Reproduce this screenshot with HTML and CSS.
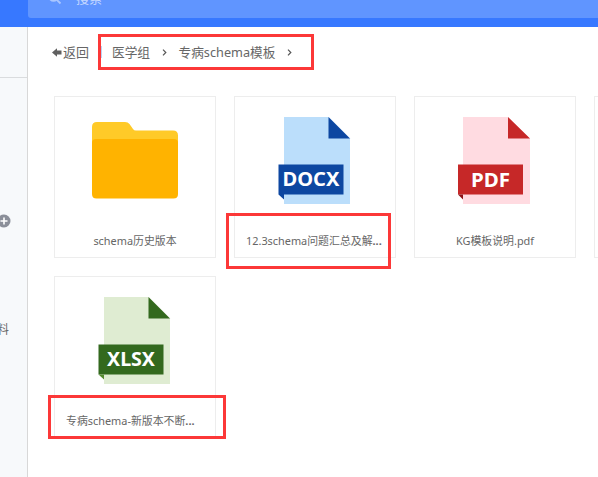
FILE: index.html
```html
<!DOCTYPE html>
<html lang="zh-CN">
<head>
<meta charset="utf-8">
<title>专病schema模板</title>
<link rel="stylesheet" href="styles.css">
</head>
<body>
<header class="topbar">
  <div class="search">
    <svg class="search-icon" width="14" height="14" viewBox="0 0 14 14"><circle cx="5.5" cy="5.5" r="4.3"/><path d="M8.5 8.5L12.5 12.5"/></svg>
    <span>搜索</span>
  </div>
</header>
<div class="layout">
  <aside class="sidebar">
    <div class="side-head"></div>
    <svg class="add" width="14" height="14" viewBox="0 0 14 14"><circle cx="7" cy="7" r="6.500"/><path d="M7 3.5V10.5M3.5 7H10.5"/></svg>
    <div class="side-item">资料</div>
  </aside>
  <main class="content">
    <nav class="crumbs">
      <svg class="back" width="10" height="9" viewBox="0 0 10 9"><path d="M0 4.5L5 .2V2.500H9.5V6.500H5V8.800Z"/></svg>
      <span class="back-text">返回</span>
      <i class="divider"></i>
      <span class="crumb-group">医学组</span>
      <svg class="chevron" width="5" height="7" viewBox="0 0 5 7"><path d="M1 .7L3.8 3.5L1 6.3"/></svg>
      <span class="crumb-current">专病schema模板</span>
      <svg class="chevron" width="5" height="7" viewBox="0 0 5 7"><path d="M1 .7L3.8 3.5L1 6.3"/></svg>
    </nav>
    <div class="files">
      <div class="card">
        <svg class="icon" width="160" height="120" viewBox="0 0 160 120">
          <path fill="#ffca28" d="M37 55V30Q37 25 42 25H70Q73 25 74.500 27L78 32Q79 33.500 81 33.500H118Q123 33.500 123 38.500V55Z"/>
          <path fill="#ffb300" d="M37 46Q37 42 41 42H119Q123 42 123 46V97Q123 101.500 118.500 101.500H41.500Q37 101.500 37 97Z"/>
        </svg>
        <div class="name">schema历史版本</div>
      </div>
      <div class="card">
        <svg class="icon" width="160" height="120" viewBox="0 0 160 120">
          <path fill="#bbdefb" d="M49 20H93.500L115 41.500V107H49Z"/>
          <path fill="#0d47a1" d="M93.500 20L115 41.500H93.500ZM43.500 67.500H108.500V97.500H49V102.500L43.500 97.500Z"/>
          <text class="type" x="76" y="89" textLength="57" lengthAdjust="spacingAndGlyphs">DOCX</text>
        </svg>
        <div class="name long">12.3schema问题汇总及解<b>...</b></div>
      </div>
      <div class="card">
        <svg class="icon" width="160" height="120" viewBox="0 0 160 120">
          <path fill="#ffdbe1" d="M48 20H93L115 41.500V107H48Z"/>
          <path fill="#c62828" d="M93 20L115 41.500H93ZM43 67.500H108V97.500H43Z"/>
          <path fill="#8e1016" d="M43 97.500H48V102.500Z"/>
          <text class="type" x="75.500" y="90" textLength="39" lengthAdjust="spacingAndGlyphs">PDF</text>
        </svg>
        <div class="name">KG模板说明.pdf</div>
      </div>
      <div class="card"></div>
      <div class="card">
        <svg class="icon" width="160" height="120" viewBox="0 0 160 120">
          <path fill="#dfecd2" d="M49 20H93.500L115 41.500V107H49Z"/>
          <path fill="#33691e" d="M93.500 20L115 41.500H93.500ZM43.500 67.500H108.500V97.500H43.500Z"/>
          <path fill="#558b2f" d="M43.500 97.500H49V102.500Z"/>
          <text class="type" x="76" y="89" textLength="48" lengthAdjust="spacingAndGlyphs">XLSX</text>
        </svg>
        <div class="name long">专病schema-新版本不断<b>...</b></div>
      </div>
    </div>
  </main>
</div>
<div class="mark mark-path"></div>
<div class="mark mark-docx"></div>
<div class="mark mark-xlsx"></div>
</body>
</html>
```
FILE: styles.css
```css
* { box-sizing: border-box; }
body {
  margin: 0;
  width: 598px;
  height: 477px;
  overflow: hidden;
  position: relative;
  background: #fff;
  color: #666;
  font-family: "Noto Sans", "Noto Sans CJK SC", sans-serif;
}
svg { display: block; flex: none; }
.topbar { height: 27px; padding-left: 28px; background: #3778ff; overflow: hidden; }
.search {
  display: flex;
  align-items: flex-end;
  height: 18px;
  padding: 0 0 0 20px;
  border-radius: 0 0 0 3px;
  background: #6095ff;
  color: #c3d7ff;
  font-size: 13px;
  line-height: 20px;
}
.search-icon { margin-bottom: 13px; fill: none; stroke: #a9c6ff; stroke-width: 1.8; }
.search span { margin: 0 0 10px 14px; }
.layout { display: flex; height: 450px; overflow: hidden; }
.sidebar {
  display: flex;
  flex: none;
  flex-direction: column;
  align-items: flex-end;
  width: 28px;
  border-right: 1px solid #d8d8d8;
  background: #f7f9fb;
  overflow: hidden;
}
.side-head { width: 27px; height: 51px; border-bottom: 1px solid #dadcde; }
.add { margin: 136px 16px 0 0; fill: #8b8f99; stroke: #fff; stroke-width: 1.6; }
.add circle { stroke: none; }
.side-item { margin: 92px 18px 0 0; font-size: 12px; line-height: 20px; white-space: nowrap; }
.content { flex: none; width: 750px; padding: 15px 0 0 26px; }
.crumbs { display: flex; align-items: center; height: 20px; font-size: 13px; line-height: 20px; white-space: nowrap; }
.back { margin: 0 1px 0 -2px; fill: #606060; }
.back-text { width: 26px; }
.divider { flex: none; width: 1px; height: 12px; margin: 0 10px 0 12px; background: #bcd4f5; }
.crumb-group { width: 39px; font-size: 12.7px; }
.crumb-current { width: 97px; margin-left: 11.5px; font-size: 12.7px; }
.chevron { margin-left: 11px; fill: none; stroke: #555; stroke-width: 1.2; }
.files { display: grid; grid-template-columns: repeat(4, 162px); grid-auto-rows: 162px; gap: 18px; margin-top: 34px; }
.card { border: 1px solid #ededed; background: #fff; overflow: hidden; }
.type { fill: #fff; font: bold 20px "Noto Sans", sans-serif; text-anchor: middle; }
.name { height: 20px; margin-top: 14px; font-size: 10.9px; line-height: 20px; text-align: center; white-space: nowrap; }
.name.long { padding-left: 11px; text-align: left; }
.mark { position: absolute; border: 3px solid #fc3838; }
.mark-path { left: 98px; top: 34px; width: 216px; height: 36px; }
.mark-docx { left: 226px; top: 213px; width: 165px; height: 56px; }
.mark-xlsx { left: 48px; top: 395px; width: 178px; height: 44px; }
```
